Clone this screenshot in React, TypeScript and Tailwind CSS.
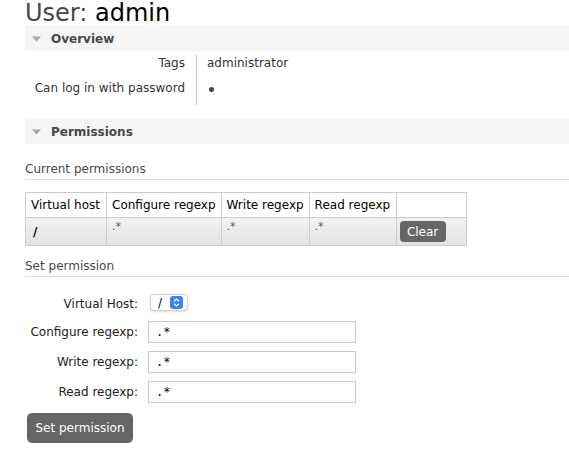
import React from 'react';

const font = { fontFamily: '"DejaVu Sans", Verdana, sans-serif' } as React.CSSProperties;

function SectionBar({ title }: { title: string }) {
    return (
        <div className="flex h-[25px] items-center bg-[#f5f5f5] pl-[7px]">
            <svg width="9" height="6" viewBox="0 0 9 6" className="mr-[10px]">
                <path d="M0 0.5h9L4.5 5.5z" fill="#a8a8a8" />
            </svg>
            <span className="text-[12px] font-bold text-[#484848]">{title}</span>
        </div>
    );
}

function SubHeading({ title, className }: { title: string; className: string }) {
    return (
        <div className={`border-b border-[#ddd] pb-[2px] text-[12px] leading-[15px] text-[#484848] ${className}`}>
            {title}
        </div>
    );
}

const overview = [
    { label: 'Tags', value: 'administrator' },
    { label: 'Can log in with password', value: '•' },
];

const columns = [
    { title: 'Virtual host', w: 'w-[81px]' },
    { title: 'Configure regexp', w: 'w-[114px]' },
    { title: 'Write regexp', w: 'w-[88px]' },
    { title: 'Read regexp', w: 'w-[87px]' },
    { title: '', w: 'w-[70px]' },
];

const regexpFields = ['Configure regexp:', 'Write regexp:', 'Read regexp:'];

export default function App() {
    return (
        <div className="min-h-[454px] bg-white pl-[25px] text-[#222]" style={font}>
            <h1 className="mt-[1px] text-[24px] leading-[24px] font-normal">
                <span className="text-[#484848]">User: </span>
                <span className="text-black">admin</span>
            </h1>

            <div className="mt-[1px]">
                <SectionBar title="Overview" />
            </div>

            {/* Overview key/value list */}
            <div className="mt-[4px] flex">
                <div className="w-[172px] border-r border-[#ccc] pr-[11px] text-right">
                    {overview.map((row) => (
                        <div key={row.label} className="h-[25px] pt-[1px] text-[12px] leading-[15px] text-[#333]">
                            {row.label}
                        </div>
                    ))}
                </div>
                <div className="pl-[10px]">
                    {overview.map((row) => (
                        <div key={row.label} className="h-[25px] pt-[1px] text-[12px] leading-[15px] text-[#333]">
                            {row.value === '•' ? (
                                <span className="ml-[2px] mt-[6px] block h-[5px] w-[5px] rounded-full bg-[#444]" />
                            ) : (
                                row.value
                            )}
                        </div>
                    ))}
                </div>
            </div>

            <div className="mt-[14px]">
                <SectionBar title="Permissions" />
            </div>

            <SubHeading title="Current permissions" className="mt-[18px]" />

            <table className="mt-[12px] table-fixed border-collapse whitespace-nowrap text-[12px]">
                <thead>
                    <tr className="h-[25px]">
                        {columns.map((c, i) => (
                            <th key={i} className={`${c.w} border border-[#ccc] px-[5px] text-left font-normal text-black`}>
                                {c.title}
                            </th>
                        ))}
                    </tr>
                </thead>
                <tbody>
                    <tr className="h-[28px] bg-gradient-to-b from-[#f2f2f2] to-[#e2e2e2]">
                        <td className="border border-[#ccc] px-[7px] font-bold text-black">/</td>
                        <td className="border border-[#ccc] px-[5px] pt-[3px] align-top text-[11px] leading-[12px] text-[#555]">.*</td>
                        <td className="border border-[#ccc] px-[5px] pt-[3px] align-top text-[11px] leading-[12px] text-[#555]">.*</td>
                        <td className="border border-[#ccc] px-[5px] pt-[3px] align-top text-[11px] leading-[12px] text-[#555]">.*</td>
                        <td className="border border-[#ccc] px-[3px]">
                            <button className="h-[21px] w-[46px] rounded-[4px] bg-[#666] text-[12px] text-white">Clear</button>
                        </td>
                    </tr>
                </tbody>
            </table>

            <SubHeading title="Set permission" className="mt-[13px]" />

            <div className="mt-[17px] flex flex-col gap-[8px]">
                <div className="flex items-center">
                    <span className="w-[113px] text-right text-[12px] text-[#222]">Virtual Host:</span>
                    <div className="mb-[2px] ml-[12px] flex h-[17px] w-[38px] items-center rounded-[4px] border border-[#d0d0d0] bg-white pl-[7px] shadow-sm">
                        <span className="text-[12px] leading-none text-black">/</span>
                        <div className="ml-[8px] flex h-[13px] w-[13px] items-center justify-center rounded-[3px] bg-[#3b82f6]">
                            <svg width="7" height="9" viewBox="0 0 7 9">
                                <path d="M1 3.2L3.5 1 6 3.2M1 5.8L3.5 8 6 5.8" fill="none" stroke="white" strokeWidth="1.3" />
                            </svg>
                        </div>
                    </div>
                </div>
                {regexpFields.map((label) => (
                    <div key={label} className="flex items-center">
                        <span className="w-[113px] text-right text-[12px] text-[#222]">{label}</span>
                        <div
                            className="ml-[10px] flex h-[22px] w-[208px] items-center border border-[#c8c8c8] bg-white pl-[7px] text-[12px] text-black"
                            style={{ fontFamily: '"DejaVu Sans Mono", monospace' }}
                        >
                            .*
                        </div>
                    </div>
                ))}
            </div>

            <button className="mt-[10px] ml-[2px] h-[30px] w-[106px] rounded-[5px] bg-[#666] text-[12px] text-white">
                Set permission
            </button>
        </div>
    );
}
